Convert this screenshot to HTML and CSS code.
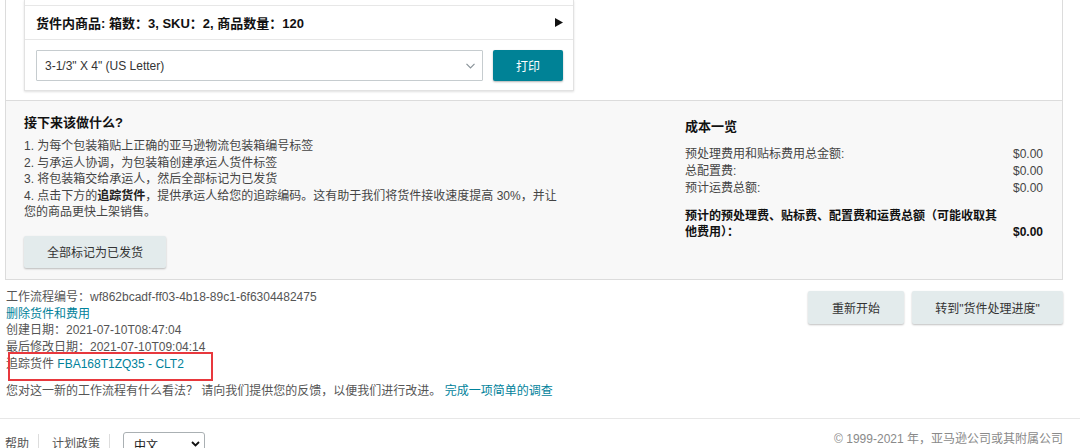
FILE: index.html
```html
<!DOCTYPE html>
<html lang="zh-CN">
<head>
<meta charset="utf-8">
<title>货件处理</title>
<link rel="stylesheet" href="styles.css">
</head>
<body>
<div class="panel">
  <div class="panel-top">
    <div class="card">
      <div class="card-prev"></div>
      <div class="card-summary">
        <span>货件内商品: 箱数：3, SKU：2, 商品数量：120</span>
        <svg class="tri" width="8" height="9" viewBox="0 0 8 9"><polygon points="0,0 8,4.5 0,9" fill="#111"/></svg>
      </div>
      <div class="card-print">
        <div class="select">
          <span>3-1/3" X 4" (US Letter)</span>
          <svg width="9" height="6" viewBox="0 0 9 6"><polyline points="0.5,0.8 4.5,4.8 8.5,0.8" fill="none" stroke="#8a9399" stroke-width="1.2"/></svg>
        </div>
        <button class="btn-primary">打印</button>
      </div>
    </div>
  </div>
  <div class="panel-bottom">
    <div class="steps">
      <div class="title">接下来该做什么?</div>
      <div class="step-list">
        1. 为每个包装箱贴上正确的亚马逊物流包装箱编号标签<br>
        2. 与承运人协调，为包装箱创建承运人货件标签<br>
        3. 将包装箱交给承运人，然后全部标记为已发货<br>
        4. 点击下方的<b>追踪货件</b>，提供承运人给您的追踪编码。这有助于我们将货件接收速度提高 30%，并让<br>
        您的商品更快上架销售。
      </div>
      <button class="btn-secondary btn-ship">全部标记为已发货</button>
    </div>
    <div class="cost">
      <div class="title">成本一览</div>
      <div class="cost-rows">
        <div class="cost-row"><span>预处理费用和贴标费用总金额:</span><span>$0.00</span></div>
        <div class="cost-row"><span>总配置费:</span><span>$0.00</span></div>
        <div class="cost-row"><span>预计运费总额:</span><span>$0.00</span></div>
      </div>
      <div class="cost-total">
        <span>预计的预处理费、贴标费、配置费和运费总额（可能收取其<br>他费用）：</span>
        <span>$0.00</span>
      </div>
    </div>
  </div>
</div>

<div class="info">
  <div class="meta">
    <div>工作流程编号：wf862bcadf-ff03-4b18-89c1-6f6304482475</div>
    <div><a class="link">删除货件和费用</a></div>
    <div>创建日期：2021-07-10T08:47:04</div>
    <div>最后修改日期：2021-07-10T09:04:14</div>
    <div>追踪货件 <a class="link">FBA168T1ZQ35 - CLT2</a></div>
    <div class="feedback">您对这一新的工作流程有什么看法？ 请向我们提供您的反馈，以便我们进行改进。 <a class="link">完成一项简单的调查</a></div>
  </div>
  <div class="actions">
    <button class="btn-secondary btn-restart">重新开始</button>
    <button class="btn-secondary btn-goto">转到"货件处理进度"</button>
  </div>
  <div class="highlight"></div>
</div>

<footer class="footer">
  <div class="footer-left">
    <span class="flink sep">帮助</span>
    <span class="flink sep">计划政策</span>
    <div class="lang">
      <span>中文</span>
      <svg width="9" height="6" viewBox="0 0 9 6"><polyline points="1,1 4.5,4.5 8,1" fill="none" stroke="#111" stroke-width="1.8"/></svg>
    </div>
  </div>
  <div class="copyright">© 1999-2021 年，亚马逊公司或其附属公司</div>
</footer>
</body>
</html>
```

FILE: styles.css
```css
* { box-sizing: border-box; }
html, body { margin: 0; padding: 0; }
body {
  width: 1080px;
  height: 448px;
  overflow: hidden;
  background: #fff;
  font-family: "Liberation Sans", "Noto Sans CJK SC", Arial, sans-serif;
  font-size: 12px;
  color: #333;
}
button { font-family: inherit; font-size: 12px; cursor: pointer; }

.panel {
  margin-left: 5px;
  width: 1058px;
  border-left: 1px solid #dcdcdc;
  border-right: 1px solid #dcdcdc;
  border-bottom: 1px solid #dcdcdc;
}
.panel-top {
  height: 101px;
  padding-left: 18px;
  border-bottom: 1px solid #dcdcdc;
  background: #fff;
}
.card {
  width: 550px;
  border: 1px solid #e2e2e2;
  border-top: 0;
  background: #fff;
  box-shadow: 0 1px 2px rgba(0, 0, 0, 0.12);
}
.card-prev {
  height: 6px;
  border-bottom: 1px solid #e7e7e7;
}
.card-summary {
  height: 34px;
  display: flex;
  align-items: center;
  justify-content: space-between;
  padding: 0 10px 0 11px;
  border-bottom: 1px solid #e7e7e7;
  font-size: 13px;
  font-weight: bold;
  color: #111;
}
.card-print {
  height: 50px;
  display: flex;
  gap: 10px;
  padding: 10px 10px 0 11px;
}
.select {
  width: 447px;
  height: 31px;
  border: 1px solid #c6cccf;
  border-radius: 1px;
  background: #fff;
  display: flex;
  align-items: center;
  justify-content: space-between;
  padding: 0 7px 0 8px;
  color: #333;
}
.btn-primary {
  width: 70px;
  height: 31px;
  border: 0;
  border-radius: 2px;
  background: #008296;
  color: #fff;
  box-shadow: 0 1px 2px rgba(0, 0, 0, 0.3);
}

.panel-bottom {
  height: 178px;
  background: #f8f8f8;
  padding: 13px 19px 0 18px;
  display: grid;
  grid-template-columns: 1fr 358px;
}
.title {
  font-size: 13px;
  font-weight: bold;
  color: #111;
  line-height: 17px;
}
.step-list {
  margin-top: 7px;
  line-height: 16.6px;
  color: #444;
  white-space: nowrap;
}
.step-list b { color: #222; }
.btn-secondary {
  height: 32px;
  border: 0;
  border-radius: 2px;
  background: #e3ebec;
  color: #333;
  box-shadow: 0 1px 2px rgba(0, 0, 0, 0.25);
}
.btn-ship {
  margin-top: 15px;
  width: 142px;
}
.cost .title { margin-top: 4px; }
.cost-rows {
  margin-top: 11px;
  line-height: 17px;
  color: #444;
}
.cost-row {
  display: flex;
  justify-content: space-between;
}
.cost-total {
  margin-top: 11px;
  line-height: 16px;
  display: flex;
  justify-content: space-between;
  align-items: flex-end;
  font-weight: bold;
  color: #111;
}

.info {
  position: relative;
  display: flex;
  justify-content: space-between;
  align-items: flex-start;
  padding: 9px 17px 19px 6px;
  border-bottom: 1px solid #e7e7e7;
  height: 139px;
}
.meta {
  line-height: 16.7px;
  color: #555;
}
.feedback { margin-top: 10px; }
.link { color: #00829b; text-decoration: none; }
.actions {
  display: flex;
  gap: 8px;
  margin-top: 2px;
}
.btn-restart { width: 96px; height: 33px; }
.btn-goto { width: 151px; height: 33px; }
.highlight {
  position: absolute;
  left: 8px;
  top: 72px;
  width: 205px;
  height: 29px;
  border: 2px solid #e8383d;
}

.footer {
  display: flex;
  justify-content: space-between;
  align-items: flex-start;
  padding: 13px 17px 0 5px;
}
.footer-left {
  display: flex;
  align-items: center;
  height: 24px;
}
.flink {
  color: #555;
  line-height: 17px;
}
.sep {
  padding-right: 9px;
  margin-right: 13px;
  border-right: 1px solid #ddd;
  height: 20px;
  display: flex;
  align-items: center;
}
.lang {
  width: 82px;
  height: 24px;
  border: 1px solid #aab0b3;
  border-radius: 3px;
  background: #fff;
  display: flex;
  align-items: center;
  justify-content: space-between;
  padding: 0 4px 0 10px;
  color: #222;
}
.copyright {
  color: #8a8a8a;
  line-height: 17px;
  margin-top: -1px;
}
```
